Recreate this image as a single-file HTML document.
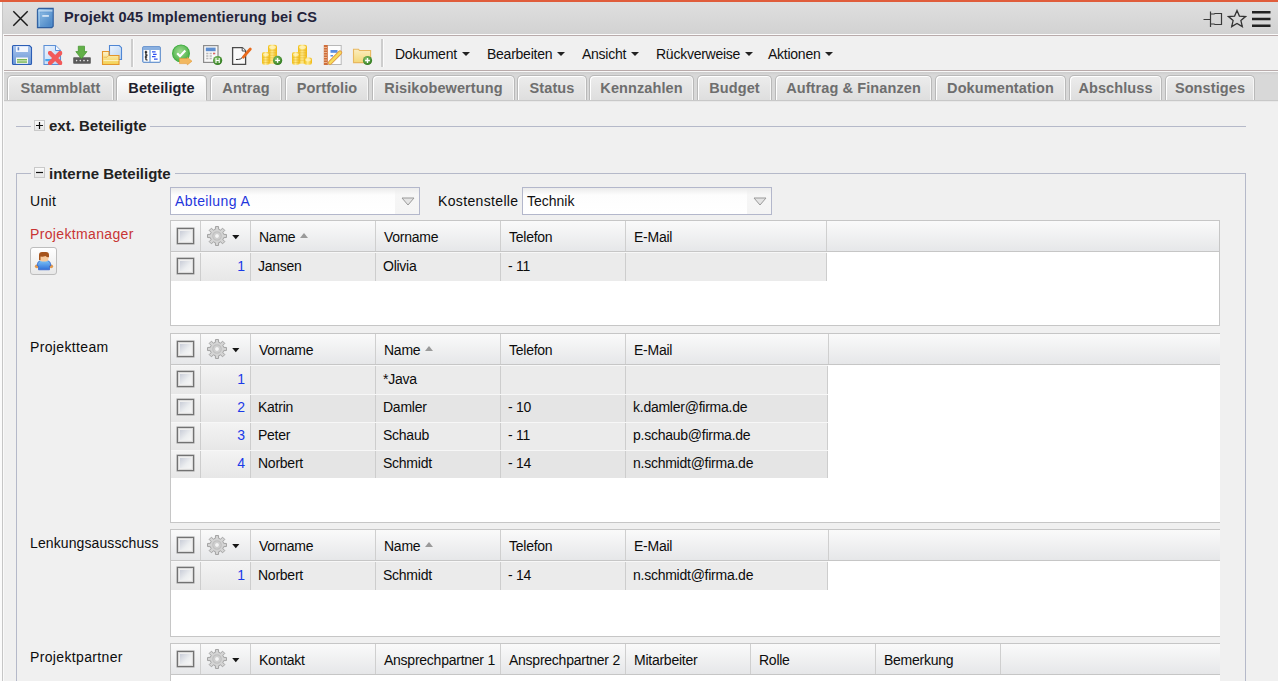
<!DOCTYPE html>
<html><head><meta charset="utf-8">
<style>
*{box-sizing:border-box;margin:0;padding:0}
html,body{width:1278px;height:681px;overflow:hidden;background:#f0f0f0;font-family:"Liberation Sans",sans-serif;font-size:14px;color:#1a1a1a}
.a{position:absolute}
#topbar{left:0;top:0;width:1278px;height:2px;background:#e05d3b}
#leftstrip{left:0;top:2px;width:2px;height:679px;background:#fbfbfb}
#leftline{left:2px;top:2px;width:1px;height:679px;background:#c6c6c6}
#title{left:3px;top:2px;width:1275px;height:32px;background:linear-gradient(#dfdfdf,#d2d2d2)}
#tline1{left:3px;top:34px;width:1275px;height:1px;background:#fbfbfb}
#tline2{left:4px;top:35px;width:1274px;height:1px;background:#b9abab}
#toolbar{left:3px;top:36px;width:1275px;height:34px;background:#f0f0f0}
#tline3{left:4px;top:70px;width:1274px;height:1px;background:#b9abab}
#tabstrip{left:3px;top:71px;width:1275px;height:30px;background:linear-gradient(#f8f8f8 0,#f8f8f8 1px,#cdcdcd 1px,#d8d8d8 4px,#d8d8d8 100%)}
#tabline{left:3px;top:100px;width:1275px;height:2px;background:linear-gradient(#c8c8c8 0,#c8c8c8 1px,#e8e8e8 1px)}
.tab{position:absolute;top:75px;height:25px;border:1px solid #b9b9b9;border-bottom:none;border-radius:5px 5px 0 0;background:linear-gradient(#ececec,#dedede);box-shadow:inset 1px 1px 0 #fff,inset -1px 0 0 #f6f6f6;font-weight:bold;color:#6e6e6e;font-size:14.5px;letter-spacing:0.1px;text-align:center;line-height:24px}
.tab.act{background:linear-gradient(#ffffff,#ececec);color:#1e1e2e;height:25px;border-color:#b4b4b4}
.menu{position:absolute;top:46px;font-size:14px;color:#111;line-height:16px;letter-spacing:-0.25px}
.caret{display:inline-block;width:0;height:0;border-left:4px solid transparent;border-right:4px solid transparent;border-top:4.5px solid #222;vertical-align:middle;margin-left:5px;position:relative;top:-1px}
.sep{position:absolute;top:39px;width:3px;height:28px;background:#cdcdcd;border-right:1px solid #fbfbfb}
.ico{position:absolute;top:45px;width:20px;height:20px}
</style>
<style>
.lbl{position:absolute;font-size:14px;line-height:16px;color:#0c0c0c;white-space:nowrap;letter-spacing:0.35px}
.fs{position:absolute;border:1px solid #b5b9c9}
.leg{position:absolute;background:#f0f0f0;height:16px}
.tog{position:absolute;width:11px;height:11px;border:1px solid #c9c9c9;background:linear-gradient(#fafafa,#e6e6e6)}
.legt{position:absolute;font-weight:bold;font-size:15px;letter-spacing:0px;line-height:16px;color:#222;white-space:nowrap}
.combo{position:absolute;height:28px;border:1px solid #b3b7cb;background:linear-gradient(#ebebeb,#fdfdfd 7px,#fff)}
.combo .trg{position:absolute;right:0;top:0;width:24px;height:26px;background:linear-gradient(#ececec,#f6f6f6 7px,#f4f4f4)}
.combo .txt{position:absolute;left:4px;top:5px;line-height:16px;font-size:14px;white-space:nowrap}
.grid{position:absolute;left:170px;background:#fff;border:1px solid #c6c6c6;overflow:hidden}
.hdr{position:absolute;left:0;top:0;height:31px;border-bottom:1px solid #c6c6c6;background:linear-gradient(#fafafa,#e6e7e9)}
.hc{position:absolute;top:0;height:30px;border-right:1px solid #cfcfcf}
.ht{position:absolute;left:8px;top:8px;line-height:16px;font-size:14px;color:#0c0c0c;white-space:nowrap;letter-spacing:-0.25px}
.row{position:absolute;left:0;height:28px;border-top:1px solid #f7f7f7}
.rc{position:absolute;top:0;bottom:0;border-right:1px solid #cdcdcd}
.rt{position:absolute;left:7px;top:5px;line-height:16px;font-size:14px;color:#0c0c0c;white-space:nowrap;letter-spacing:-0.25px}
.num{position:absolute;right:5px;top:5px;line-height:16px;font-size:14px;color:#1a3ae8}
.cb{position:absolute;left:6px;width:17px;height:16px;border:1px solid #727272;background:#efefef;box-shadow:0 0 0 0.5px #9a9a9a,inset 0 0 0 1px #dadada}
.cb::after{content:"";position:absolute;left:2px;top:2px;right:2px;bottom:2px;background:linear-gradient(135deg,#c9cdd8,#eceef0 60%,#f6f6f6)}
.sort{display:inline-block;width:0;height:0;border-left:4.5px solid transparent;border-right:4.5px solid transparent;border-bottom:5px solid #9a9a9a;margin-left:5px;position:relative;top:-4px}
</style>
</head><body>
<div class="a" id="topbar"></div>
<div class="a" id="leftstrip"></div>
<div class="a" id="leftline"></div>
<div class="a" style="left:3px;top:34px;width:1px;height:647px;background:#fafafa;z-index:1"></div>
<div class="a" id="title"></div>
<div class="a" id="tline1"></div>
<div class="a" id="tline2"></div>
<div class="a" id="toolbar"></div>
<div class="a" id="tline3"></div>
<div class="a" id="tabstrip"></div>
<div class="a" id="tabline"></div>

<!-- title bar content -->
<svg class="a" style="left:12px;top:10px" width="18" height="18" viewBox="0 0 18 18"><path d="M1.3 1.3L15.7 15.7M15.7 1.3L1.3 15.7" stroke="#1a1a1a" stroke-width="1.45"/></svg>
<svg class="a" style="left:36px;top:7px" width="19" height="22" viewBox="36 7 19 22">
<defs><linearGradient id="bk" x1="0" y1="0" x2="1" y2="1"><stop offset="0" stop-color="#9ac6ea"/><stop offset="1" stop-color="#3d7cc0"/></linearGradient></defs>
<path d="M38.8 8.4H53.2V26.2L51.8 27.6H37.4V9.8Z" fill="url(#bk)" stroke="#2f5e9e" stroke-width="1.1"/>
<path d="M38.6 10.9H52.4" stroke="#d4e6f7" stroke-width="1"/>
<path d="M39.6 12.3V26.4" stroke="#b5d6f2" stroke-width="0.9"/>
<path d="M40 12.2H51.5V26H40Z" fill="none" stroke="#5b95d0" stroke-width="0.5"/>
<rect x="42.3" y="15.2" width="6.6" height="1.5" fill="#e6f1fb"/>
</svg>
<div class="a" style="left:64px;top:9px;font-weight:bold;font-size:14.5px;letter-spacing:0.17px;color:#23233a;line-height:16px">Projekt 045 Implementierung bei CS</div>

<!-- right icons -->
<svg class="a" style="left:1203px;top:9px" width="20" height="18" viewBox="0 0 20 18"><path d="M0.5 10.5H7M7.5 2.5v16M7.5 5h3.5l1 -0.5h6.5v11h-6.5l-1 -0.5h-3.5" fill="none" stroke="#3a3a3a" stroke-width="1.2"/></svg>
<svg class="a" style="left:1227px;top:9px" width="20" height="20" viewBox="0 0 20 20"><path d="M10 1.5l2.4 5.6 6.1.5-4.6 4 1.4 6-5.3-3.2-5.3 3.2 1.4-6-4.6-4 6.1-.5z" fill="none" stroke="#333" stroke-width="1.3" stroke-linejoin="miter"/></svg>
<svg class="a" style="left:1252px;top:10px" width="19" height="18" viewBox="0 0 19 18"><path d="M0 2.2h18.5M0 9h18.5M0 15.8h18.5" stroke="#222" stroke-width="2.4"/></svg>

<!-- toolbar separators -->
<div class="sep" style="left:131px"></div>
<div class="sep" style="left:381px"></div>

<!-- menus -->
<div class="menu" style="left:395px">Dokument<span class="caret"></span></div>
<div class="menu" style="left:487px">Bearbeiten<span class="caret"></span></div>
<div class="menu" style="left:582px">Ansicht<span class="caret"></span></div>
<div class="menu" style="left:656px">Rückverweise<span class="caret"></span></div>
<div class="menu" style="left:768px">Aktionen<span class="caret"></span></div>

<!-- tabs -->
<div class="tab" style="left:7px;width:107px">Stammblatt</div>
<div class="tab act" style="left:116px;width:91px">Beteiligte</div>
<div class="tab" style="left:210px;width:72px">Antrag</div>
<div class="tab" style="left:285px;width:84px">Portfolio</div>
<div class="tab" style="left:372px;width:143px">Risikobewertung</div>
<div class="tab" style="left:517px;width:70px">Status</div>
<div class="tab" style="left:589px;width:105px">Kennzahlen</div>
<div class="tab" style="left:697px;width:75px">Budget</div>
<div class="tab" style="left:775px;width:157px">Auftrag &amp; Finanzen</div>
<div class="tab" style="left:935px;width:131px">Dokumentation</div>
<div class="tab" style="left:1069px;width:93px">Abschluss</div>
<div class="tab" style="left:1165px;width:90px">Sonstiges</div>

<div class="a" style="left:117px;top:100px;width:89px;height:2px;background:linear-gradient(#e4e4e4,#eaeaea)"></div>
<svg class="a" style="left:0;top:0" width="400" height="70" viewBox="0 0 400 70">
<defs>
<linearGradient id="blu" x1="0" y1="0" x2="0" y2="1"><stop offset="0" stop-color="#a9c6ee"/><stop offset="1" stop-color="#6b97d6"/></linearGradient>
<linearGradient id="docb" x1="0" y1="0" x2="1" y2="1"><stop offset="0" stop-color="#eef5fe"/><stop offset="1" stop-color="#b6d2f4"/></linearGradient>
<linearGradient id="fold" x1="0" y1="0" x2="0" y2="1"><stop offset="0" stop-color="#fdf3cc"/><stop offset="1" stop-color="#f3d050"/></linearGradient>
<linearGradient id="fold2" x1="0" y1="0" x2="0" y2="1"><stop offset="0" stop-color="#fbeec0"/><stop offset="1" stop-color="#f4d878"/></linearGradient>
<linearGradient id="gold" x1="0" y1="0" x2="1" y2="0"><stop offset="0" stop-color="#f0bc10"/><stop offset="0.45" stop-color="#fde98c"/><stop offset="1" stop-color="#f0b810"/></linearGradient>
<radialGradient id="grn" cx="0.45" cy="0.4" r="0.6"><stop offset="0" stop-color="#9edc90"/><stop offset="1" stop-color="#4cb048"/></radialGradient>
<radialGradient id="grn2" cx="0.4" cy="0.35" r="0.65"><stop offset="0" stop-color="#8cc870"/><stop offset="1" stop-color="#2f7a1e"/></radialGradient>
</defs>
<!-- save -->
<path d="M12.5 46.5Q12.5 45.5 13.5 45.5H29.5L31.5 47.5V63.5Q31.5 64.5 30.5 64.5H13.5Q12.5 64.5 12.5 63.5Z" fill="url(#blu)" stroke="#2b5db5" stroke-width="1.1"/>
<rect x="16" y="46.3" width="12" height="5.7" fill="#f2f6fd"/>
<rect x="17.6" y="47.2" width="1.6" height="3.2" fill="#6088c8"/>
<rect x="16" y="57.5" width="12" height="6.3" fill="#f5f8f2"/>
<rect x="17" y="59" width="10" height="1.5" fill="#7ab858"/>
<rect x="17" y="61.3" width="10" height="1.5" fill="#7ab858"/>
<!-- delete -->
<path d="M44 45.5H55.5L60.5 50.5V64.5H44Z" fill="url(#docb)" stroke="#5b8fd6" stroke-width="1.1"/>
<path d="M55.5 45.5V50.5H60.5" fill="#f4f8fe" stroke="#5b8fd6" stroke-width="1"/>
<rect x="45.3" y="59" width="7" height="2.2" fill="#45a6f0"/>
<clipPath id="xc"><rect x="48" y="51" width="14.2" height="14"/></clipPath><path d="M48.5 51.5L61.8 64.5M61.8 51.5L48.5 64.5" stroke="#f25a5a" stroke-width="4.4" clip-path="url(#xc)"/>
<!-- download -->
<rect x="73.2" y="57.3" width="17.6" height="6.5" rx="0.8" fill="#5a5a5a"/>
<circle cx="76.6" cy="60.6" r="0.8" fill="#e8e8e8"/><circle cx="80.3" cy="60.6" r="0.8" fill="#e8e8e8"/><circle cx="84" cy="60.6" r="0.8" fill="#e8e8e8"/><circle cx="87.7" cy="60.6" r="0.8" fill="#e8e8e8"/>
<path d="M78.3 46.2H84.5V51.6H87L81.4 58.8L75.8 51.6H78.3Z" fill="#62b048" stroke="#3e9128" stroke-width="0.7"/>
<!-- folder+doc -->
<path d="M109.5 45.5H119.3L121.5 47.7V59.5H109.5Z" fill="url(#docb)" stroke="#4f86d4" stroke-width="1.1"/>
<path d="M102.5 51.5H109V55.5H119V64.5H102.5Z" fill="url(#fold)" stroke="#e3952c" stroke-width="1.1"/><path d="M103.5 57.2h3.5l1.5-1.5" stroke="#e8b048" stroke-width="0.8" fill="none"/><path d="M103.5 60.5h15" stroke="#fff6d0" stroke-width="0.8"/>
<!-- table icon -->
<rect x="142.5" y="46.5" width="18" height="16" rx="1.5" fill="#8ab0e0" stroke="#7099d0" stroke-width="1"/>
<rect x="143.6" y="50" width="5.6" height="11.6" fill="#fff"/>
<rect x="150.8" y="50" width="8.8" height="11.6" fill="#fff"/>
<path d="M145.9 50.8v3.6q0 .8 .9 .8h.8M144.8 52.2h2.4M145.9 55.6v3.6q0 .8 .9 .8h.8M144.8 57h2.4" stroke="#1a1a1a" stroke-width="1.2" fill="none"/>
<path d="M152 51.8h3.6M153 54.4h3.6M152 56.6h3.6M154 59.2h3.6" stroke="#3050f0" stroke-width="1.3"/>
<!-- green check -->
<circle cx="181" cy="53.4" r="8.4" fill="url(#grn)" stroke="#3fae3f" stroke-width="1.1"/>
<path d="M177.2 53.3L180 56.2L185.3 50.6" fill="none" stroke="#fff" stroke-width="2.2"/>
<path d="M179.5 58.5H187.3V57.3L192 61.2L187.3 64.9V63.6H179.5Z" fill="#f2b860" stroke="#e39a38" stroke-width="0.6"/>
<!-- calculator -->
<rect x="203.6" y="45.6" width="14.4" height="16.8" fill="#f8f8f8" stroke="#8c8c8c" stroke-width="1.2"/>
<rect x="205.8" y="47.6" width="9.8" height="3.6" fill="#5e8ed0"/>
<path d="M206.2 53.5h2.2M209.6 53.5h2.2M213 53.5h2.2M206.2 56h2.2M209.6 56h2.2M206.2 58.5h2.2M209.6 58.5h2.2" stroke="#b8b8b8" stroke-width="1.4"/>
<path d="M213 53.5h2.2" stroke="#e26464" stroke-width="1.4"/>
<circle cx="217.6" cy="60.5" r="4.6" fill="url(#grn2)"/>
<path d="M216 58v5M219.2 58v5M216 60.5h3.2" stroke="#fff" stroke-width="1.1"/>
<!-- edit doc -->
<path d="M232.6 47.6H242.4L245.6 50.8V64.4H232.6Z" fill="#fafafa" stroke="#4a4a4a" stroke-width="1.3"/>
<path d="M242.2 47.6V51H245.6" fill="#fff" stroke="#4a4a4a" stroke-width="1"/>
<path d="M236 59.5Q241.5 59.7 242.5 57" stroke="#333" fill="none" stroke-width="1"/>
<path d="M243.3 57.2L250.3 49" stroke="#e86a1c" stroke-width="2.8" stroke-linecap="round"/>
<!-- coins+ -->
<rect x="268" y="44.8" width="9" height="19" rx="2.2" fill="url(#gold)"/>
<path d="M269 50.3h7M269 52.8h7M269 55.3h7M269 57.8h7M269 60.3h7" stroke="#e2a812" stroke-width="0.6" opacity="0.6"/>
<ellipse cx="272.5" cy="47.2" rx="3.4" ry="1.8" fill="#fff4c0" opacity="0.8"/>
<rect x="262" y="52" width="7.8" height="12.8" rx="2.2" fill="url(#gold)"/>
<path d="M263 57.5h6M263 60h6M263 62.5h6" stroke="#e2a812" stroke-width="0.6" opacity="0.6"/>
<ellipse cx="265.9" cy="54.5" rx="2.9" ry="1.6" fill="#fff4c0" opacity="0.8"/>
<circle cx="277.6" cy="60.4" r="4.6" fill="url(#grn2)"/>
<path d="M275.2 60.4h4.8M277.6 58v4.8" stroke="#fff" stroke-width="1.3"/>
<!-- coins -->
<rect x="298" y="44.8" width="9" height="19" rx="2.2" fill="url(#gold)"/>
<path d="M299 50.3h7M299 52.8h7M299 55.3h7M299 57.8h7M299 60.3h7" stroke="#e2a812" stroke-width="0.6" opacity="0.6"/>
<ellipse cx="302.5" cy="47.2" rx="3.4" ry="1.8" fill="#fff4c0" opacity="0.8"/>
<rect x="292" y="52" width="7.8" height="12.8" rx="2.2" fill="url(#gold)"/>
<path d="M293 57.5h6M293 60h6M293 62.5h6" stroke="#e2a812" stroke-width="0.6" opacity="0.6"/>
<ellipse cx="295.9" cy="54.5" rx="2.9" ry="1.6" fill="#fff4c0" opacity="0.8"/>
<rect x="304.2" y="57.5" width="7.8" height="7.3" rx="2.2" fill="url(#gold)"/>
<ellipse cx="308.1" cy="59.8" rx="2.9" ry="1.6" fill="#fff4c0" opacity="0.8"/>
<!-- notebook -->
<rect x="325" y="45.5" width="16.2" height="19" fill="#fdfdfd" stroke="#b8b8b8" stroke-width="1"/>
<rect x="323.8" y="45" width="4" height="20" fill="#cf6e3a"/>
<path d="M324 47.5h3M324 50h3M324 52.5h3M324 55h3M324 57.5h3M324 60h3M324 62.5h3" stroke="#f0c8a8" stroke-width="0.8"/>
<rect x="330.5" y="50" width="7" height="2.8" fill="#5a8de0"/>
<rect x="330.5" y="55" width="2.5" height="1.5" fill="#5a8de0"/>
<path d="M330 62.8L340 52.6" stroke="#e09a48" stroke-width="4.4" stroke-linecap="round"/>
<path d="M330 62.8L340 52.6" stroke="#f6dc5a" stroke-width="2.6" stroke-linecap="round"/>
<!-- folder+ -->
<path d="M353.5 49.2H358.5L359.5 50.5H370.6V62.6H353.5Z" fill="url(#fold2)" stroke="#e8b860" stroke-width="1.1"/>
<circle cx="367.5" cy="60.5" r="4.6" fill="url(#grn2)"/>
<path d="M365.1 60.5h4.8M367.5 58.1v4.8" stroke="#fff" stroke-width="1.3"/>
</svg>

<div class="a" style="left:16px;top:126px;width:1230px;height:1px;background:#b5b9c9"></div>
<div class="leg" style="left:31px;top:118px;width:119px"></div>
<div class="tog" style="left:34px;top:120px"><svg width="9" height="9" style="position:absolute;left:0;top:0"><path d="M1 4.5h7M4.5 1v7" stroke="#111" stroke-width="1.2"/></svg></div>
<div class="legt" style="left:49px;top:118px">ext. Beteiligte</div>
<div class="fs" style="left:16px;top:173px;width:1230px;height:600px"></div>
<div class="leg" style="left:31px;top:165px;width:144px"></div>
<div class="tog" style="left:34px;top:167px"><svg width="9" height="9" style="position:absolute;left:0;top:0"><path d="M1 4.5h7" stroke="#111" stroke-width="1.2"/></svg></div>
<div class="legt" style="left:49px;top:166px">interne Beteiligte</div>
<div class="lbl" style="left:30px;top:193px">Unit</div>
<div class="combo" style="left:170px;top:187px;width:250px"><div class="txt" style="color:#1f36dc;letter-spacing:0.39px">Abteilung A</div><div class="trg"></div><svg style="position:absolute;left:230px;top:9px" width="14" height="9"><path d="M1 1h12l-6 7z" fill="#e4e4e4" stroke="#9a9a9a" stroke-width="1"/></svg></div>
<div class="lbl" style="left:438px;top:193px">Kostenstelle</div>
<div class="combo" style="left:522px;top:187px;width:250px"><div class="txt" style="color:#111">Technik</div><div class="trg"></div><svg style="position:absolute;left:230px;top:9px" width="14" height="9"><path d="M1 1h12l-6 7z" fill="#e4e4e4" stroke="#9a9a9a" stroke-width="1"/></svg></div>
<div class="lbl" style="left:30px;top:226px;color:#c83434">Projektmanager</div>
<div class="a" style="left:30px;top:247px;width:27px;height:28px;border:1px solid #bdbdbd;border-radius:3px;background:linear-gradient(#ffffff,#e8e8e8)"></div>
<svg class="a" style="left:30px;top:247px" width="28" height="28" viewBox="30 247 28 28">
<defs><linearGradient id="pbody" x1="0" y1="0" x2="0" y2="1"><stop offset="0" stop-color="#7cc4f8"/><stop offset="1" stop-color="#2f6fd8"/></linearGradient></defs>
<circle cx="36.8" cy="266.3" r="1.9" fill="#e39a4c"/><circle cx="51.2" cy="266.3" r="1.9" fill="#e39a4c"/>
<path d="M37 265.5Q37.5 261 40.5 260.5H47.5Q50.5 261 51 265.5L49.5 266V269.8H38.5V266Z" fill="url(#pbody)" stroke="#2f5fc8" stroke-width="0.7"/>
<rect x="39.6" y="254.5" width="8.8" height="7" rx="2.4" fill="#f5c99c"/>
<path d="M39 260V255Q39 252 42 252H46Q49 252 49 255V257.2Q47 257.5 45.5 256Q43 257 40.5 256.5V260Z" fill="#a5541c"/>
</svg>
<div class="grid" style="top:220px;width:1050px;height:106px">
<div class="hdr" style="width:1050px">
<div class="hc" style="left:0px;width:30px">
<div class="cb" style="top:7px"></div>
</div>
<div class="hc" style="left:30px;width:50px">
</div>
<div class="hc" style="left:80px;width:125px">
<div class="ht">Name<span class="sort"></span></div>
</div>
<div class="hc" style="left:205px;width:125px">
<div class="ht">Vorname</div>
</div>
<div class="hc" style="left:330px;width:125px">
<div class="ht">Telefon</div>
</div>
<div class="hc" style="left:455px;width:201px">
<div class="ht">E-Mail</div>
</div>
</div>
<div class="row" style="top:31px;height:29px;width:656px;background:#ebebeb">
<div class="rc" style="left:0px;width:30px;background:linear-gradient(#f3f3f3,#e7e7e7)">
<div class="cb" style="top:5px"></div>
</div>
<div class="rc" style="left:30px;width:50px;background:linear-gradient(#f3f3f3,#e7e7e7)">
<div class="num" style="top:5px">1</div>
</div>
<div class="rc" style="left:80px;width:125px">
<div class="rt" style="top:5px">Jansen</div>
</div>
<div class="rc" style="left:205px;width:125px">
<div class="rt" style="top:5px">Olivia</div>
</div>
<div class="rc" style="left:330px;width:125px">
<div class="rt" style="top:5px">- 11</div>
</div>
<div class="rc" style="left:455px;width:201px">
</div>
</div>
</div>
<svg class="a" style="left:207px;top:226px" width="34" height="20" viewBox="0 0 34 20">
<g transform="translate(10,10)"><path d="M-1.67,-6.70 L-1.50,-9.48 L1.50,-9.48 L1.67,-6.70 L3.55,-5.91 L5.64,-7.77 L7.77,-5.64 L5.91,-3.55 L6.70,-1.67 L9.48,-1.50 L9.48,1.50 L6.70,1.67 L5.91,3.55 L7.77,5.64 L5.64,7.77 L3.55,5.91 L1.67,6.70 L1.50,9.48 L-1.50,9.48 L-1.67,6.70 L-3.55,5.91 L-5.64,7.77 L-7.77,5.64 L-5.91,3.55 L-6.70,1.67 L-9.48,1.50 L-9.48,-1.50 L-6.70,-1.67 L-5.91,-3.55 L-7.77,-5.64 L-5.64,-7.77 L-3.55,-5.91Z" fill="#d4d4d4" stroke="#9c9c9c" stroke-width="0.9"/>
<circle r="4.2" fill="none" stroke="#c0c0c0" stroke-width="1.2"/><circle r="2.4" fill="#f4f4f4" stroke="#b8b8b8" stroke-width="0.6"/></g>
<path d="M25.2 9h7.2l-3.6 4.2z" fill="#151515"/></svg>
<div class="lbl" style="left:30px;top:339px">Projektteam</div>
<div class="grid" style="top:333px;width:1050px;height:190px;border-right:none">
<div class="hdr" style="width:1050px">
<div class="hc" style="left:0px;width:30px">
<div class="cb" style="top:7px"></div>
</div>
<div class="hc" style="left:30px;width:50px">
</div>
<div class="hc" style="left:80px;width:125px">
<div class="ht">Vorname</div>
</div>
<div class="hc" style="left:205px;width:125px">
<div class="ht">Name<span class="sort"></span></div>
</div>
<div class="hc" style="left:330px;width:125px">
<div class="ht">Telefon</div>
</div>
<div class="hc" style="left:455px;width:203px">
<div class="ht">E-Mail</div>
</div>
</div>
<div class="row" style="top:31px;height:29px;width:657px;background:#ebebeb">
<div class="rc" style="left:0px;width:30px;background:linear-gradient(#f3f3f3,#e7e7e7)">
<div class="cb" style="top:5px"></div>
</div>
<div class="rc" style="left:30px;width:50px;background:linear-gradient(#f3f3f3,#e7e7e7)">
<div class="num" style="top:5px">1</div>
</div>
<div class="rc" style="left:80px;width:125px">
</div>
<div class="rc" style="left:205px;width:125px">
<div class="rt" style="top:5px">*Java</div>
</div>
<div class="rc" style="left:330px;width:125px">
</div>
<div class="rc" style="left:455px;width:202px">
</div>
</div>
<div class="row" style="top:60px;height:28px;width:657px;background:#e5e5e5">
<div class="rc" style="left:0px;width:30px;background:linear-gradient(#f3f3f3,#e7e7e7)">
<div class="cb" style="top:4px"></div>
</div>
<div class="rc" style="left:30px;width:50px;background:linear-gradient(#f3f3f3,#e7e7e7)">
<div class="num" style="top:4px">2</div>
</div>
<div class="rc" style="left:80px;width:125px">
<div class="rt" style="top:4px">Katrin</div>
</div>
<div class="rc" style="left:205px;width:125px">
<div class="rt" style="top:4px">Damler</div>
</div>
<div class="rc" style="left:330px;width:125px">
<div class="rt" style="top:4px">- 10</div>
</div>
<div class="rc" style="left:455px;width:202px">
<div class="rt" style="top:4px">k.damler@firma.de</div>
</div>
</div>
<div class="row" style="top:88px;height:28px;width:657px;background:#ebebeb">
<div class="rc" style="left:0px;width:30px;background:linear-gradient(#f3f3f3,#e7e7e7)">
<div class="cb" style="top:4px"></div>
</div>
<div class="rc" style="left:30px;width:50px;background:linear-gradient(#f3f3f3,#e7e7e7)">
<div class="num" style="top:4px">3</div>
</div>
<div class="rc" style="left:80px;width:125px">
<div class="rt" style="top:4px">Peter</div>
</div>
<div class="rc" style="left:205px;width:125px">
<div class="rt" style="top:4px">Schaub</div>
</div>
<div class="rc" style="left:330px;width:125px">
<div class="rt" style="top:4px">- 11</div>
</div>
<div class="rc" style="left:455px;width:202px">
<div class="rt" style="top:4px">p.schaub@firma.de</div>
</div>
</div>
<div class="row" style="top:116px;height:28px;width:657px;background:#e5e5e5">
<div class="rc" style="left:0px;width:30px;background:linear-gradient(#f3f3f3,#e7e7e7)">
<div class="cb" style="top:4px"></div>
</div>
<div class="rc" style="left:30px;width:50px;background:linear-gradient(#f3f3f3,#e7e7e7)">
<div class="num" style="top:4px">4</div>
</div>
<div class="rc" style="left:80px;width:125px">
<div class="rt" style="top:4px">Norbert</div>
</div>
<div class="rc" style="left:205px;width:125px">
<div class="rt" style="top:4px">Schmidt</div>
</div>
<div class="rc" style="left:330px;width:125px">
<div class="rt" style="top:4px">- 14</div>
</div>
<div class="rc" style="left:455px;width:202px">
<div class="rt" style="top:4px">n.schmidt@firma.de</div>
</div>
</div>
</div>
<svg class="a" style="left:207px;top:339px" width="34" height="20" viewBox="0 0 34 20">
<g transform="translate(10,10)"><path d="M-1.67,-6.70 L-1.50,-9.48 L1.50,-9.48 L1.67,-6.70 L3.55,-5.91 L5.64,-7.77 L7.77,-5.64 L5.91,-3.55 L6.70,-1.67 L9.48,-1.50 L9.48,1.50 L6.70,1.67 L5.91,3.55 L7.77,5.64 L5.64,7.77 L3.55,5.91 L1.67,6.70 L1.50,9.48 L-1.50,9.48 L-1.67,6.70 L-3.55,5.91 L-5.64,7.77 L-7.77,5.64 L-5.91,3.55 L-6.70,1.67 L-9.48,1.50 L-9.48,-1.50 L-6.70,-1.67 L-5.91,-3.55 L-7.77,-5.64 L-5.64,-7.77 L-3.55,-5.91Z" fill="#d4d4d4" stroke="#9c9c9c" stroke-width="0.9"/>
<circle r="4.2" fill="none" stroke="#c0c0c0" stroke-width="1.2"/><circle r="2.4" fill="#f4f4f4" stroke="#b8b8b8" stroke-width="0.6"/></g>
<path d="M25.2 9h7.2l-3.6 4.2z" fill="#151515"/></svg>
<div class="lbl" style="left:30px;top:535px;letter-spacing:0.1px">Lenkungsausschuss</div>
<div class="grid" style="top:529px;width:1050px;height:108px;border-right:none">
<div class="hdr" style="width:1050px">
<div class="hc" style="left:0px;width:30px">
<div class="cb" style="top:7px"></div>
</div>
<div class="hc" style="left:30px;width:50px">
</div>
<div class="hc" style="left:80px;width:125px">
<div class="ht">Vorname</div>
</div>
<div class="hc" style="left:205px;width:125px">
<div class="ht">Name<span class="sort"></span></div>
</div>
<div class="hc" style="left:330px;width:125px">
<div class="ht">Telefon</div>
</div>
<div class="hc" style="left:455px;width:203px">
<div class="ht">E-Mail</div>
</div>
</div>
<div class="row" style="top:31px;height:29px;width:657px;background:#ebebeb">
<div class="rc" style="left:0px;width:30px;background:linear-gradient(#f3f3f3,#e7e7e7)">
<div class="cb" style="top:5px"></div>
</div>
<div class="rc" style="left:30px;width:50px;background:linear-gradient(#f3f3f3,#e7e7e7)">
<div class="num" style="top:5px">1</div>
</div>
<div class="rc" style="left:80px;width:125px">
<div class="rt" style="top:5px">Norbert</div>
</div>
<div class="rc" style="left:205px;width:125px">
<div class="rt" style="top:5px">Schmidt</div>
</div>
<div class="rc" style="left:330px;width:125px">
<div class="rt" style="top:5px">- 14</div>
</div>
<div class="rc" style="left:455px;width:202px">
<div class="rt" style="top:5px">n.schmidt@firma.de</div>
</div>
</div>
</div>
<svg class="a" style="left:207px;top:535px" width="34" height="20" viewBox="0 0 34 20">
<g transform="translate(10,10)"><path d="M-1.67,-6.70 L-1.50,-9.48 L1.50,-9.48 L1.67,-6.70 L3.55,-5.91 L5.64,-7.77 L7.77,-5.64 L5.91,-3.55 L6.70,-1.67 L9.48,-1.50 L9.48,1.50 L6.70,1.67 L5.91,3.55 L7.77,5.64 L5.64,7.77 L3.55,5.91 L1.67,6.70 L1.50,9.48 L-1.50,9.48 L-1.67,6.70 L-3.55,5.91 L-5.64,7.77 L-7.77,5.64 L-5.91,3.55 L-6.70,1.67 L-9.48,1.50 L-9.48,-1.50 L-6.70,-1.67 L-5.91,-3.55 L-7.77,-5.64 L-5.64,-7.77 L-3.55,-5.91Z" fill="#d4d4d4" stroke="#9c9c9c" stroke-width="0.9"/>
<circle r="4.2" fill="none" stroke="#c0c0c0" stroke-width="1.2"/><circle r="2.4" fill="#f4f4f4" stroke="#b8b8b8" stroke-width="0.6"/></g>
<path d="M25.2 9h7.2l-3.6 4.2z" fill="#151515"/></svg>
<div class="lbl" style="left:30px;top:649px">Projektpartner</div>
<div class="grid" style="top:643px;width:1050px;height:80px;border-right:none">
<div class="hdr" style="width:1050px">
<div class="hc" style="left:0px;width:30px">
<div class="cb" style="top:7px"></div>
</div>
<div class="hc" style="left:30px;width:50px">
</div>
<div class="hc" style="left:80px;width:125px">
<div class="ht">Kontakt</div>
</div>
<div class="hc" style="left:205px;width:125px">
<div class="ht">Ansprechpartner 1</div>
</div>
<div class="hc" style="left:330px;width:125px">
<div class="ht">Ansprechpartner 2</div>
</div>
<div class="hc" style="left:455px;width:125px">
<div class="ht">Mitarbeiter</div>
</div>
<div class="hc" style="left:580px;width:125px">
<div class="ht">Rolle</div>
</div>
<div class="hc" style="left:705px;width:125px">
<div class="ht">Bemerkung</div>
</div>
</div>
</div>
<svg class="a" style="left:207px;top:649px" width="34" height="20" viewBox="0 0 34 20">
<g transform="translate(10,10)"><path d="M-1.67,-6.70 L-1.50,-9.48 L1.50,-9.48 L1.67,-6.70 L3.55,-5.91 L5.64,-7.77 L7.77,-5.64 L5.91,-3.55 L6.70,-1.67 L9.48,-1.50 L9.48,1.50 L6.70,1.67 L5.91,3.55 L7.77,5.64 L5.64,7.77 L3.55,5.91 L1.67,6.70 L1.50,9.48 L-1.50,9.48 L-1.67,6.70 L-3.55,5.91 L-5.64,7.77 L-7.77,5.64 L-5.91,3.55 L-6.70,1.67 L-9.48,1.50 L-9.48,-1.50 L-6.70,-1.67 L-5.91,-3.55 L-7.77,-5.64 L-5.64,-7.77 L-3.55,-5.91Z" fill="#d4d4d4" stroke="#9c9c9c" stroke-width="0.9"/>
<circle r="4.2" fill="none" stroke="#c0c0c0" stroke-width="1.2"/><circle r="2.4" fill="#f4f4f4" stroke="#b8b8b8" stroke-width="0.6"/></g>
<path d="M25.2 9h7.2l-3.6 4.2z" fill="#151515"/></svg>
</body></html>
